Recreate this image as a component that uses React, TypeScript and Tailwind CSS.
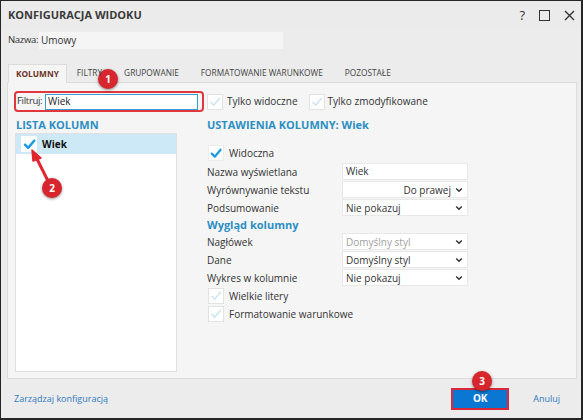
import React from "react";

const Check = ({ faded = false, size = 16 }: { faded?: boolean; size?: number }) => (
  <svg width={size} height={size} viewBox="0 0 16 16">
    <path
      d="M3.2 8.2 L6.6 11.6 L13.2 3.8"
      fill="none"
      stroke={faded ? "#c7e3f2" : "#1a9be3"}
      strokeWidth={faded ? 1.6 : 2.6}
      strokeLinecap="round"
      strokeLinejoin="round"
    />
  </svg>
);

const Box = ({ faded = false }: { faded?: boolean }) => (
  <div className="w-[16px] h-[16px] bg-white border border-[#e2e2e2] flex items-center justify-center shrink-0">
    <Check faded={faded} size={14} />
  </div>
);

const Chevron = () => (
  <svg width="8" height="6" viewBox="0 0 8 6" className="shrink-0">
    <path d="M1.2 1.5 L4 4.2 L6.8 1.5" fill="none" stroke="#333" strokeWidth="1.5" />
  </svg>
);

const Row = ({ label, children }: { label: string; children: React.ReactNode }) => (
  <div className="flex items-center h-[17px]">
    <div className="w-[135px] text-[10px] text-[#333] leading-none">{label}</div>
    {children}
  </div>
);

const Select = ({ value, right = false, muted = false }: { value: string; right?: boolean; muted?: boolean }) => (
  <div className="w-[126px] h-[17px] bg-white border border-[#e8e8e8] flex items-center pl-[3px] pr-[4px]">
    <div className={`flex-1 text-[10px] leading-none ${right ? "text-right pr-[4px]" : ""} ${muted ? "text-[#a0a0a0]" : "text-[#333]"}`}>
      {value}
    </div>
    <Chevron />
  </div>
);

const Badge = ({ n, className }: { n: string; className: string }) => (
  <div
    className={`absolute w-[20px] h-[20px] rounded-full bg-[#d7262e] text-white text-[10px] font-bold flex items-center justify-center shadow-[0_1px_3px_rgba(0,0,0,0.45)] ${className}`}
  >
    {n}
  </div>
);

export default function App() {
  return (
    <div className="w-[583px] h-[420px] border-t border-l border-r-2 border-b-2 border-[#262626] bg-[#ececec] flex flex-col relative font-['Open_Sans',sans-serif] text-[#333] overflow-hidden">
      {/* Title bar */}
      <div className="h-[28px] shrink-0 flex items-center justify-between pl-[7px] pr-[6px] bg-[#ebebeb]">
        <div className="text-[11px] font-bold text-[#3a3a3a]">KONFIGURACJA WIDOKU</div>
        <div className="flex items-center gap-[14px] text-[#333]">
          <span className="text-[13px] leading-none">?</span>
          <div className="w-[11px] h-[11px] border-[1.5px] border-[#333]" />
          <svg width="11" height="11" viewBox="0 0 11 11">
            <path d="M1 1 L10 10 M10 1 L1 10" stroke="#333" strokeWidth="1.4" />
          </svg>
        </div>
      </div>

      {/* Name */}
      <div className="mt-[3px] h-[17px] flex items-center pl-[7px]">
        <span className="text-[9.5px] tracking-[-0.3px] shrink-0 w-[31px] whitespace-nowrap">Nazwa:</span>
        <div className="w-[244px] h-[17px] bg-[#f5f5f5] flex items-center pl-[2px] text-[10px]">Umowy</div>
      </div>

      {/* Tabs */}
      <div className="mt-[15px] h-[18px] ml-[7px] flex items-stretch text-[8.3px] text-[#444] relative z-10">
        <div className="h-[19px] px-[7px] bg-[#f5f5f5] border-l border-t border-r border-[#dcdcdc] flex items-center font-bold text-[#6a3326]">
          KOLUMNY
        </div>
        <div className="pl-[10px] pr-[11px] flex items-center">FILTRY</div>
        <div className="px-[11px] flex items-center">GRUPOWANIE</div>
        <div className="px-[11px] flex items-center">FORMATOWANIE WARUNKOWE</div>
        <div className="px-[11px] flex items-center">POZOSTAŁE</div>
      </div>

      {/* Panel */}
      <div className="ml-[6px] w-[570px] h-[297px] shrink-0 border border-[#dcdcdc] bg-[#f5f5f5] flex flex-col">
        {/* Filter row */}
        <div className="mt-[8px] ml-[6px] flex items-center">
          <div className="w-[190px] h-[21px] border-2 border-[#e0363e] rounded-[4px] flex items-center pl-[1px] pr-[4px]">
            <span className="text-[9.5px] tracking-[-0.3px] shrink-0 w-[28px] whitespace-nowrap">Filtruj:</span>
            <div className="flex-1 h-[16px] bg-white border border-[#3a9ad3] flex items-center pl-[2px] text-[10px] text-[#222]">
              Wiek
            </div>
          </div>
          <div className="ml-[3px] flex items-center">
            <Box faded />
            <span className="ml-[4px] text-[10px]">Tylko widoczne</span>
          </div>
          <div className="ml-[11px] flex items-center">
            <Box faded />
            <span className="ml-[3px] text-[10px]">Tylko zmodyfikowane</span>
          </div>
        </div>

        {/* Columns */}
        <div className="mt-[6px] flex pl-[7px]">
          {/* Left */}
          <div className="w-[162px] flex flex-col">
            <div className="h-[14px] flex items-center text-[11px] font-bold text-[#2b8ec4] pl-[1px]">LISTA KOLUMN</div>
            <div className="mt-[1px] h-[239px] bg-white border border-[#e0e0e0] p-0">
              <div className="h-[20px] bg-[#cde8f6] flex items-center pl-[5px]">
                <div className="w-[16px] h-[16px] bg-white flex items-center justify-center">
                  <Check size={15} />
                </div>
                <span className="ml-[5px] text-[10px] font-bold text-[#111]">Wiek</span>
              </div>
            </div>
          </div>

          {/* Right */}
          <div className="ml-[30px] flex flex-col">
            <div className="h-[14px] flex items-center text-[11px] font-bold text-[#2b8ec4]">USTAWIENIA KOLUMNY: Wiek</div>
            <div className="mt-[13px] flex items-center h-[16px] pl-[1px]">
              <div className="w-[16px] h-[16px] bg-white border border-[#ececec] flex items-center justify-center">
                <Check size={15} />
              </div>
              <span className="ml-[5px] text-[10px]">Widoczna</span>
            </div>
            <div className="mt-[2px] flex flex-col gap-[1px]">
              <Row label="Nazwa wyświetlana">
                <div className="w-[126px] h-[17px] bg-white border border-[#e8e8e8] flex items-center pl-[3px] text-[10px]">Wiek</div>
              </Row>
              <Row label="Wyrównywanie tekstu">
                <Select value="Do prawej" right />
              </Row>
              <Row label="Podsumowanie">
                <Select value="Nie pokazuj" />
              </Row>
            </div>
            <div className="mt-[2px] h-[14px] flex items-center text-[11px] font-bold text-[#2b8ec4]">Wygląd kolumny</div>
            <div className="mt-[1px] flex flex-col gap-[1px]">
              <Row label="Nagłówek">
                <Select value="Domyślny styl" muted />
              </Row>
              <Row label="Dane">
                <Select value="Domyślny styl" />
              </Row>
              <Row label="Wykres w kolumnie">
                <Select value="Nie pokazuj" />
              </Row>
            </div>
            <div className="mt-[2px] flex items-center pl-[1px]">
              <Box faded />
              <span className="ml-[5px] text-[10px]">Wielkie litery</span>
            </div>
            <div className="mt-[2px] flex items-center pl-[1px]">
              <Box faded />
              <span className="ml-[5px] text-[10px]">Formatowanie warunkowe</span>
            </div>
          </div>
        </div>
      </div>

      {/* Footer */}
      <div className="flex-1 flex items-center justify-between pl-[13px] pr-[21px]">
        <span className="text-[9px] text-[#2f7bbd]">Zarządzaj konfiguracją</span>
        <div className="flex items-center">
          <div className="w-[58px] h-[22px] border-2 border-[#d8283a] bg-[#0a78d2] flex items-center justify-center text-white text-[10px] font-bold">
            OK
          </div>
          <span className="ml-[24px] text-[9px] text-[#2f7bbd]">Anuluj</span>
        </div>
      </div>

      {/* Annotations */}
      <Badge n="1" className="left-[97px] top-[68px]" />
      <svg className="absolute left-[20px] top-[140px]" width="40" height="50" viewBox="0 0 40 50">
        <path d="M28 42 L15 16" stroke="#e0262e" strokeWidth="3" strokeLinecap="round" />
        <path d="M11 9 L20 17 L12 20 Z" fill="#e0262e" stroke="#e0262e" strokeWidth="1.5" strokeLinejoin="round" />
      </svg>
      <Badge n="2" className="left-[41px] top-[177px]" />
      <Badge n="3" className="left-[471px] top-[370px]" />
    </div>
  );
}
